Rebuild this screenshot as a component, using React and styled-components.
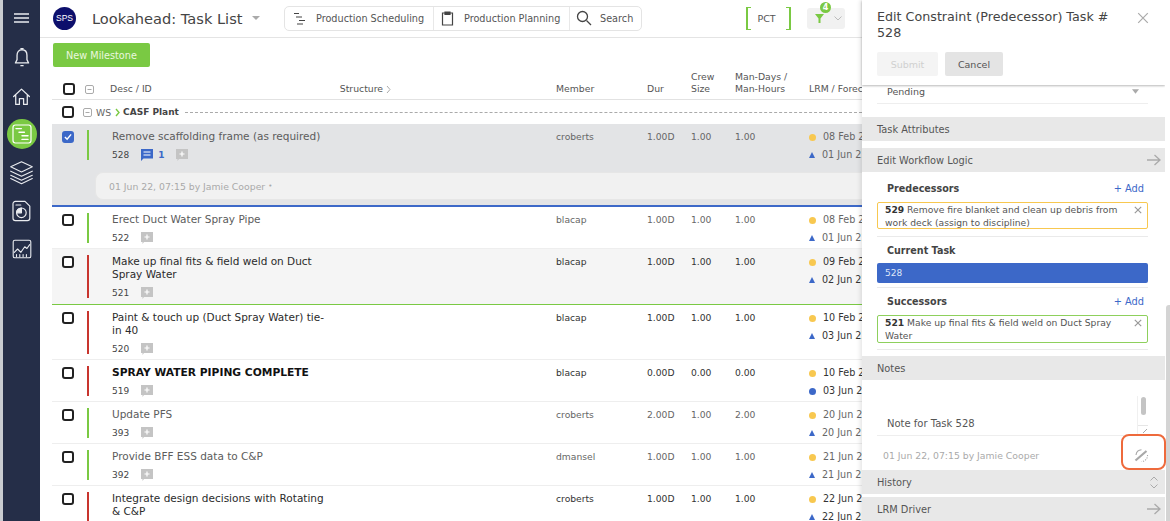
import React from 'react'
import styled, { createGlobalStyle } from 'styled-components'

const Global = createGlobalStyle`
html, body {
  margin: 0;
  height: 100%;
  overflow: hidden;
  background: #fff;
}
* { box-sizing: border-box; }
body {
  font-family: "DejaVu Sans", Verdana, sans-serif;
  font-size: 10px;
  color: #444;
}
`

const Shell = styled.div`
  display: flex;
  height: 521px;
  width: 1170px;
  overflow: hidden;
  position: relative;
  border-left: 3px solid #c9ccd1;
`

/* ---- left nav ---- */
const Sidebar = styled.nav`
  width: 37px;
  flex: none;
  background: #252e48;
  display: flex;
  flex-direction: column;
  align-items: center;
  padding-top: 8px;
`
const NavItem = styled.div`
  width: 30px;
  height: 30px;
  flex: none;
  margin-bottom: 8.2px;
  display: flex;
  align-items: center;
  justify-content: center;
  border-radius: 50%;
  color: #e9ebef;
  background: ${props => (props.$active ? '#7ac943' : 'transparent')};
`
const Burger = styled(NavItem)`
  height: 20px;
  margin-bottom: 15px;
`

/* ---- main area ---- */
const Main = styled.main`
  flex: none;
  width: 822px;
  overflow: hidden;
  display: flex;
  flex-direction: column;
`
const TopBar = styled.header`
  height: 38px;
  flex: none;
  display: flex;
  align-items: center;
  padding: 0 0 1px 13px;
  border-bottom: 1px solid #e4e4e4;
`
const Logo = styled.div`
  width: 23px;
  height: 23px;
  border-radius: 50%;
  background: #0d0f6c;
  color: #fff;
  font-family: "Liberation Sans", Arial, sans-serif;
  font-size: 8.5px;
  display: flex;
  align-items: center;
  justify-content: center;
  margin-right: 16px;
`
const PageTitle = styled.h1`
  margin: 0;
  font-weight: 400;
  font-size: 14.6px;
  color: #444;
  white-space: nowrap;
  width: 152px;
`
const TitleCaret = styled.span`
  width: 0;
  height: 0;
  margin: 0 24px 0 8px;
  border-left: 4px solid transparent;
  border-right: 4px solid transparent;
  border-top: 4px solid #aaa;
`
const NavGroup = styled.div`
  display: flex;
  height: 25px;
  border: 1px solid #e4e4e4;
  border-radius: 5px;
  width: 358px;
`
const NavButton = styled.div`
  display: flex;
  align-items: center;
  justify-content: flex-start;
  gap: ${props => props.$gap}px;
  padding-left: ${props => props.$pad}px;
  width: ${props => props.$w}px;
  font-size: 9.7px;
  color: #555;
  white-space: nowrap;
  border-left: ${props => (props.$first ? 'none' : '1px solid #e8e8e8')};
`
const Pct = styled.div`
  margin-left: 104px;
  width: 45px;
  height: 23px;
  border: 2px solid #7ac943;
  border-top-width: 1px;
  border-bottom-width: 1px;
  position: relative;
  display: flex;
  align-items: center;
  justify-content: center;
  padding-right: 4px;
  font-size: 9.5px;
  color: #555;
  &::before {
    content: '';
    position: absolute;
    top: -1px;
    bottom: -1px;
    left: 3px;
    right: 3px;
    border-top: 1px solid #fff;
    border-bottom: 1px solid #fff;
  }
`
const FilterButton = styled.div`
  margin-left: 16px;
  width: 38px;
  height: 21px;
  background: #f1f1f1;
  border-radius: 3px;
  position: relative;
  display: flex;
  align-items: center;
  padding-left: 8px;
  gap: 10px;
`
const FilterBadge = styled.span`
  position: absolute;
  top: -6px;
  left: 13px;
  width: 11px;
  height: 11px;
  border-radius: 50%;
  background: #7ac943;
  color: #fff;
  font-size: 8px;
  font-weight: 700;
  line-height: 11px;
  text-align: center;
`
const Toolbar = styled.div`
  height: 30px;
  flex: none;
  padding: 5px 0 0 13px;
`
const MilestoneButton = styled.div`
  width: 97px;
  height: 24px;
  background: #7ac943;
  border-radius: 2px;
  color: #eaf7df;
  font-size: 9.7px;
  display: flex;
  align-items: center;
  justify-content: center;
`

/* ---- table ---- */
const Table = styled.div`
  margin-left: 12px;
  width: 810px;
`
const gridCols = '60px 444px 91px 44px 44px 74px 1fr'
const HeadRow = styled.div`
  display: grid;
  grid-template-columns: ${gridCols};
  height: 32px;
  align-items: end;
  padding-bottom: 4px;
  border-bottom: 1px solid #e2e2e2;
  font-size: 9.3px;
  line-height: 12px;
  color: #555;
`
const HeadLead = styled.div`
  display: flex;
  align-items: center;
  padding-left: 11px;
  gap: 10px;
`
const HeadDesc = styled.div`
  display: flex;
  margin-left: -2px;
`
const HeadStructure = styled.span`
  margin-left: 188px;
  display: flex;
  align-items: center;
  gap: 3px;
`
const Clip = styled.span`
  white-space: nowrap;
`
const GroupRow = styled.div`
  display: flex;
  align-items: center;
  height: 24px;
  padding-left: 10px;
  font-size: 9.3px;
  color: #666;
`
const Spacer = styled.span`
  width: ${props => props.$w}px;
  flex: none;
`
const GroupName = styled.b`
  color: #444;
  font-size: 9px;
  margin: 0 6px 0 3px;
  white-space: nowrap;
`
const DashLine = styled.span`
  flex: 1;
  border-top: 1px dashed #aaa;
`
const Check = styled.span`
  width: 12px;
  height: 12px;
  flex: none;
  border-radius: 3px;
  border: 2px solid ${props => (props.$on ? '#3c68c8' : '#222')};
  background: ${props => (props.$on ? '#3c68c8' : '#fff')};
  display: flex;
  align-items: center;
  justify-content: center;
`
const RowWrap = styled.div`
  background: ${props => props.$bg || '#fff'};
  border-bottom: ${props => props.$line || '1px solid #eee'};
`
const Row = styled.div`
  display: grid;
  grid-template-columns: ${gridCols};
  padding: 6px 0 ${props => props.$pb ?? 3}px;
  min-height: 41px;
`
const Lead = styled.div`
  display: flex;
  align-items: flex-start;
  padding: 1px 0 0 10px;
`
const Bar = styled.span`
  width: 2px;
  align-self: stretch;
  margin: -1px 0 2px 13px;
  background: ${props => props.$color};
`
const Desc = styled.div`
  width: 218px;
`
const TaskTitle = styled.div`
  font-size: ${props => (props.$bold ? 10.7 : 10.5)}px;
  line-height: 13px;
  font-weight: ${props => (props.$bold ? 700 : 400)};
  color: ${props => props.$color};
`
const IdLine = styled.div`
  display: flex;
  align-items: center;
  height: 14px;
  margin-top: 5px;
  font-size: 9px;
  color: #444;
`
const NoteCount = styled.span`
  display: flex;
  align-items: center;
  gap: 5px;
  margin-left: 12px;
  color: #3c68c8;
  font-weight: 700;
`
const AddNote = styled.span`
  margin-left: ${props => props.$ml || 12}px;
  display: flex;
`
const Cell = styled.div`
  font-size: 9.2px;
  line-height: 14px;
  color: ${props => props.$color};
  white-space: nowrap;
`
const DateCell = styled.div`
  display: flex;
  flex-direction: column;
  gap: 4px;
  white-space: nowrap;
  font-size: 9.6px;
  line-height: 14px;
  color: ${props => props.$color};
`
const DateLine = styled.div`
  display: flex;
  align-items: center;
  gap: 7px;
`
const Dot = styled.span`
  width: 7px;
  height: 7px;
  flex: none;
  border-radius: 50%;
  background: ${props => props.$color};
`
const Tri = styled.span`
  width: 0;
  height: 0;
  flex: none;
  border-left: 3.5px solid transparent;
  border-right: 3.5px solid transparent;
  border-bottom: 6px solid #3c68c8;
`
const NoteBand = styled.div`
  padding: 0 0 5px 43px;
`
const NoteBox = styled.div`
  height: 28px;
  background: #f1f1f1;
  border: 1px solid #e6e6e6;
  border-right: none;
  border-radius: 8px 0 0 8px;
  display: flex;
  align-items: center;
  padding-left: 13px;
  font-size: 9.3px;
  color: #a9a9a9;
`
const NoteDotted = styled.span`
  font-size: 7px;
  margin-left: 3px;
`

/* ---- right panel ---- */
const Panel = styled.aside`
  width: 303px;
  flex: none;
  display: flex;
  flex-direction: column;
  background: #fff;
  box-shadow: -2px 0 4px rgba(0, 0, 0, 0.1);
  z-index: 2;
`
const PanelHead = styled.div`
  height: 85px;
  flex: none;
  padding: 9px 15px 0;
  position: relative;
  box-shadow: 0 1px 2px rgba(0, 0, 0, 0.28);
  z-index: 1;
`
const PanelTitle = styled.div`
  font-size: 12.7px;
  line-height: 16px;
  color: #444;
  width: 250px;
`
const PanelClose = styled.span`
  position: absolute;
  top: 12px;
  right: 16px;
  display: flex;
`
const HeadActions = styled.div`
  display: flex;
  gap: 7px;
  margin-top: 11px;
`
const Btn = styled.div`
  width: ${props => props.$w}px;
  height: 24px;
  border-radius: 2px;
  background: ${props => (props.$off ? '#f4f4f4' : '#e4e4e4')};
  color: ${props => (props.$off ? '#d0d0d0' : '#555')};
  font-size: 9.5px;
  display: flex;
  align-items: center;
  justify-content: center;
`
const PanelBody = styled.div`
  flex: 1;
  min-height: 0;
  overflow: hidden;
`
const SelectRow = styled.div`
  margin: 0 17px 13px 15px;
  height: 19px;
  display: flex;
  align-items: center;
  justify-content: space-between;
  padding: 0 9px 5px 10px;
  border-bottom: 1px solid #eee;
  font-size: 9.5px;
  color: #555;
`
const Band = styled.div`
  height: 24px;
  background: #e8e8e8;
  margin-top: ${props => props.$mt || 0}px;
  margin-bottom: ${props => props.$mb || 0}px;
  display: flex;
  align-items: center;
  justify-content: space-between;
  padding: 0 4px 0 15px;
  font-size: 9.8px;
  color: #555;
`
const Section = styled.div`
  margin: 0 17px 0 15px;
  padding-bottom: ${props => props.$pb || 7}px;
  border-bottom: 1px solid #eaeaea;
`
const SectionHead = styled.div`
  display: flex;
  justify-content: space-between;
  align-items: center;
  height: 16px;
  padding: 0 4px 0 10px;
  margin: ${props => props.$mt || 8}px 0 ${props => props.$mb || 6}px;
  font-size: 9.6px;
  font-weight: 700;
  color: #444;
`
const AddLink = styled.span`
  color: #3c68c8;
  font-weight: 400;
  font-size: 9.8px;
`
const LinkBox = styled.div`
  border: 1.5px solid ${props => props.$color};
  border-radius: 2px;
  padding: 0 22px 0 7px;
  font-size: 9.2px;
  line-height: 13px;
  color: #555;
  height: ${props => props.$h}px;
  position: relative;
  b { color: #333; }
`
const LinkRemove = styled.span`
  position: absolute;
  top: 3px;
  right: 5px;
  display: flex;
`
const CurrentBox = styled.div`
  height: 20px;
  background: #3c68c8;
  border-radius: 2px;
  color: #dfe7f8;
  font-size: 9px;
  display: flex;
  align-items: center;
  padding-left: 8px;
`
const NotesArea = styled.div`
  height: 56px;
  margin: 0 17px 0 15px;
  border-bottom: 1px solid #eee;
  display: flex;
  align-items: flex-end;
  justify-content: space-between;
  padding: 0 0 6px 10px;
  font-size: 10px;
  color: #555;
  position: relative;
`
const NoteScroll = styled.span`
  position: absolute;
  right: 0;
  top: 16px;
  bottom: 0;
  width: 11px;
  border-left: 1px solid #f0f0f0;
  &::before {
    content: '';
    position: absolute;
    left: 3px;
    top: 1px;
    width: 5px;
    height: 18px;
    border-radius: 3px;
    background: #c4c4c4;
  }
  &::after {
    content: '';
    position: absolute;
    left: 0;
    right: 0;
    top: 29px;
    border-top: 1px solid #e6e6e6;
  }
`
const ScrollGrip = styled.svg`
  position: absolute;
  left: 5px;
  bottom: 1px;
`
const NoteMeta = styled.div`
  height: 34px;
  margin: 0 0 0 21px;
  padding: 4px 16px 0 0;
  display: flex;
  align-items: center;
  justify-content: space-between;
  font-size: 9.3px;
  color: #aaa;
`
const Arrows = styled.span`
  display: flex;
  flex-direction: column;
  margin-right: 3px;
  gap: 3px;
`
const Highlight = styled.div`
  position: absolute;
  left: 1118px;
  top: 434px;
  width: 45px;
  height: 36px;
  border: 2px solid #ee6a3c;
  border-radius: 8px;
  z-index: 5;
`
const ScrollTrack = styled.div`
  width: 5px;
  flex: none;
  padding: 305px 0 0 1px;
  background: #fff;
  z-index: 3;
  &::before {
    content: '';
    display: block;
    height: 216px;
    background: #d4d4d4;
    border-radius: 3px 0 0 0;
  }
`

/* ---- icons ---- */
const Stroke = ({ size = 20, children, color = 'currentColor', w = 1.2 }) => (
  <svg width={size} height={size} viewBox="0 0 20 20" fill="none" stroke={color} strokeWidth={w} strokeLinecap="round" strokeLinejoin="round">
    {children}
  </svg>
)
const GanttLines = ({ color }) => (
  <g stroke={color} strokeWidth="1.200">
    <path d="M5 5.500h4.500M7.500 8.500h4.500M10 11.500h5M10 14.500h5" />
  </g>
)
const AddIcon = () => (
  <svg width="12" height="12" viewBox="0 0 12 12">
    <path d="M0 0h12v10H3l-1.500 2V10H0z" fill="#c4c4c4" />
    <path d="M6 2.500v5M3.500 5h5" stroke="#fff" strokeWidth="1.200" />
  </svg>
)
const Cross = ({ size = 8, color = '#999', w = 1.5 }) => (
  <svg width={size} height={size} viewBox="0 0 10 10">
    <path d="M1 1l8 8M9 1l-8 8" stroke={color} strokeWidth={w} />
  </svg>
)
const ArrowRight = () => (
  <svg width="14" height="12" viewBox="0 0 14 12" fill="none" stroke="#aaa" strokeWidth="1.300">
    <path d="M0 6h13M7.500 1l5.500 5-5.500 5" />
  </svg>
)
const Collapse = () => (
  <svg width="9" height="9" viewBox="0 0 9 9" fill="none" stroke="#aaa">
    <rect x="0.500" y="0.500" width="8" height="8" rx="1.500" />
    <path d="M2.500 4.500h4" />
  </svg>
)
const TickMark = () => (
  <svg width="9" height="8" viewBox="0 0 9 8" fill="none" stroke="#fff" strokeWidth="1.600">
    <path d="M1 4l2.500 2.500L8 1" />
  </svg>
)
const Chevron = ({ color = '#aaa', w = 1 }) => (
  <svg width="5" height="9" viewBox="0 0 5 9" fill="none" stroke={color} strokeWidth={w}>
    <path d="M1 1l3 3.500L1 8" />
  </svg>
)

const green = '#7ac943'
const red = '#c8352e'

const rows = [
  { id: 522, title: 'Erect Duct Water Spray Pipe', bar: green, member: 'blacap', dur: '1.00D', crew: '1.00', man: '1.00', d1: '08 Feb 22', d2: '01 Jun 22', muted: true },
  { id: 521, title: 'Make up final fits & field weld on Duct Spray Water', bar: red, member: 'blacap', dur: '1.00D', crew: '1.00', man: '1.00', d1: '09 Feb 22', d2: '02 Jun 22', bg: '#f5f5f5', line: `1px solid ${green}`, pb: 4 },
  { id: 520, title: 'Paint & touch up (Duct Spray Water) tie-in 40', bar: red, member: 'blacap', dur: '1.00D', crew: '1.00', man: '1.00', d1: '10 Feb 22', d2: '03 Jun 22' },
  { id: 519, title: 'SPRAY WATER PIPING COMPLETE', bold: true, bar: red, member: 'blacap', dur: '0.00D', crew: '0.00', man: '0.00', d1: '10 Feb 22', d2: '03 Jun 22', dot2: true },
  { id: 393, title: 'Update PFS', bar: green, member: 'croberts', dur: '2.00D', crew: '1.00', man: '2.00', d1: '20 Jun 22', d2: '20 Jun 22', muted: true },
  { id: 392, title: 'Provide BFF ESS data to C&P', bar: green, member: 'dmansel', dur: '1.00D', crew: '1.00', man: '1.00', d1: '21 Jun 22', d2: '21 Jun 22', muted: true },
  { id: 391, title: 'Integrate design decisions with Rotating & C&P', bar: red, member: 'croberts', dur: '1.00D', crew: '1.00', man: '1.00', d1: '22 Jun 22', d2: '22 Jun 22' },
]

const TaskCells = ({ row, children }) => {
  const textColor = row.muted ? '#666' : '#333'
  const titleColor = row.bold ? '#111' : row.muted ? '#5c5c5c' : '#2b2b2b'
  return (
    <Row $pb={row.pb}>
      <Lead>
        <Check $on={row.on}>{row.on && <TickMark />}</Check>
        <Bar $color={row.bar} />
      </Lead>
      <Desc>
        <TaskTitle $bold={row.bold} $color={titleColor}>{row.title}</TaskTitle>
        <IdLine>{row.id}{children}</IdLine>
      </Desc>
      <Cell $color={textColor}>{row.member}</Cell>
      <Cell $color={textColor}>{row.dur}</Cell>
      <Cell $color={textColor}>{row.crew}</Cell>
      <Cell $color={textColor}>{row.man}</Cell>
      <DateCell $color={textColor}>
        <DateLine><Dot $color="#f8c850" />{row.d1}</DateLine>
        <DateLine>{row.dot2 ? <Dot $color="#3c68c8" /> : <Tri />}{row.d2}</DateLine>
      </DateCell>
    </Row>
  )
}

const App = () => {
  return (
    <>
      <Global />
      <Shell>
        <Sidebar>
          <Burger>
            <svg width="15" height="10" viewBox="0 0 15 10" stroke="#e9ebef" strokeWidth="1.500">
              <path d="M0 1h15M0 5h15M0 9h15" />
            </svg>
          </Burger>
          <NavItem>
            <Stroke size={22}>
              <path d="M10 2.500c-3 0-4.500 2.300-4.500 5v4L4 14.500h12L14.500 11.500v-4c0-2.700-1.500-5-4.500-5z" />
              <path d="M9 1.500h2M9 17h2" />
            </Stroke>
          </NavItem>
          <NavItem>
            <Stroke size={21}>
              <path d="M2.500 10L10 3l7.500 7M4.500 9v8.500h3.500V12h4v5.500h3.500V9" />
            </Stroke>
          </NavItem>
          <NavItem $active>
            <Stroke size={24} color="#fff" w={1}>
              <rect x="2.500" y="2.500" width="15" height="15" rx="2" />
              <GanttLines color="#fff" />
            </Stroke>
          </NavItem>
          <NavItem>
            <Stroke size={27} w={0.800}>
              <path d="M10 2l8 3.800-8 3.800-8-3.800zM2 9l8 3.800L18 9M2 12l8 3.800 8-3.800M2 14.500l8 3.800 8-3.800" />
            </Stroke>
          </NavItem>
          <NavItem>
            <Stroke size={24} w={1}>
              <path d="M4.500 2h8l4 4v10a2 2 0 0 1-2 2h-10a2 2 0 0 1-2-2V4a2 2 0 0 1 2-2z" />
              <circle cx="9.500" cy="11.500" r="4" />
              <path d="M9.500 11.500V7.500a4 4 0 0 0-4 4z" fill="currentColor" />
              <path d="M5 5h4" />
            </Stroke>
          </NavItem>
          <NavItem>
            <Stroke size={22} w={1}>
              <rect x="2" y="2" width="16" height="16" rx="1.500" />
              <path d="M3 13l3-3 3 3 3.500-5 2 1.500L17 6" />
              <path d="M5 15v2M8 15v2M11 15v2M14 15v2" />
            </Stroke>
          </NavItem>
        </Sidebar>

        <Main>
          <TopBar>
            <Logo>SPS</Logo>
            <PageTitle>Lookahead: Task List</PageTitle>
            <TitleCaret />
            <NavGroup>
              <NavButton $first $w={148} $gap={10} $pad={9}>
                <svg width="12" height="13" viewBox="0 0 12 13" stroke="#444" strokeWidth="1.200">
                  <path d="M0 1.500h5M2 5h6M5 8.500h6M3 12h6" />
                </svg>
                Production Scheduling
              </NavButton>
              <NavButton $w={136} $gap={10} $pad={7}>
                <svg width="13" height="15" viewBox="0 0 13 15" fill="none" stroke="#444" strokeWidth="1.200">
                  <path d="M4 2H1.500v12h10V2H9" />
                  <path d="M4 1h5v2.500H4z" fill="#444" />
                </svg>
                Production Planning
              </NavButton>
              <NavButton $w={72} $gap={8} $pad={6}>
                <svg width="16" height="16" viewBox="0 0 16 16" fill="none" stroke="#444" strokeWidth="1.300">
                  <circle cx="6.500" cy="6.500" r="5" />
                  <path d="M10.500 10.500L15 15" />
                </svg>
                Search
              </NavButton>
            </NavGroup>
            <Pct>PCT</Pct>
            <FilterButton>
              <svg width="9" height="9" viewBox="0 0 9 9">
                <path d="M0 0h9L5.500 4.500V9h-2V4.500z" fill="#7ac943" />
              </svg>
              <FilterBadge>4</FilterBadge>
              <svg width="8" height="5" viewBox="0 0 8 5" fill="none" stroke="#bbb">
                <path d="M.5.500L4 4 7.500.500" />
              </svg>
            </FilterButton>
          </TopBar>
          <Toolbar>
            <MilestoneButton>New Milestone</MilestoneButton>
          </Toolbar>
          <Table>
            <HeadRow>
              <HeadLead>
                <Check />
                <Collapse />
              </HeadLead>
              <HeadDesc>
                Desc / ID
                <HeadStructure>Structure <Chevron /></HeadStructure>
              </HeadDesc>
              <span>Member</span>
              <span>Dur</span>
              <span>Crew<br />Size</span>
              <span>Man-Days /<br />Man-Hours</span>
              <Clip>LRM / Forecast</Clip>
            </HeadRow>
            <GroupRow>
              <Check />
              <Spacer $w={9} />
              <Collapse />
              <Spacer $w={4} />
              WS
              <Spacer $w={4} />
              <Chevron color="#7ac943" w={1.400} />
              <GroupName>CASF Plant</GroupName>
              <DashLine />
            </GroupRow>
            <RowWrap $bg="#e3e4e6" $line="2px solid #3c68c8">
              <TaskCells row={{ id: 528, title: 'Remove scaffolding frame (as required)', bar: green, member: 'croberts', dur: '1.00D', crew: '1.00', man: '1.00', d1: '08 Feb 22', d2: '01 Jun 22', on: true, pb: 10, muted: true }}>
                <NoteCount>
                  <svg width="12" height="12" viewBox="0 0 12 12">
                    <path d="M0 0h12v9.500H2.500L0 12z" fill="#3c68c8" />
                    <path d="M2.500 3h7M2.500 6h7" stroke="#fff" />
                  </svg>
                  1
                </NoteCount>
                <AddNote $ml={12}><AddIcon /></AddNote>
              </TaskCells>
              <NoteBand>
                <NoteBox>01 Jun 22, 07:15 by Jamie Cooper<NoteDotted>•</NoteDotted></NoteBox>
              </NoteBand>
            </RowWrap>
            {rows.map(row => (
              <RowWrap key={row.id} $bg={row.bg} $line={row.line}>
                <TaskCells row={row}>
                  <AddNote><AddIcon /></AddNote>
                </TaskCells>
              </RowWrap>
            ))}
          </Table>
        </Main>

        <Panel>
          <PanelHead>
            <PanelTitle>Edit Constraint (Predecessor) Task # 528</PanelTitle>
            <PanelClose><Cross size={12} color="#aaa" w={1} /></PanelClose>
            <HeadActions>
              <Btn $off $w={61}>Submit</Btn>
              <Btn $w={58}>Cancel</Btn>
            </HeadActions>
          </PanelHead>
          <PanelBody>
            <SelectRow>
              Pending
              <svg width="7" height="5" viewBox="0 0 8 5"><path d="M0 0h8L4 5z" fill="#aaa" /></svg>
            </SelectRow>
            <Band $mb={7}>Task Attributes</Band>
            <Band>Edit Workflow Logic <ArrowRight /></Band>
            <Section>
              <SectionHead>Predecessors <AddLink>+ Add</AddLink></SectionHead>
              <LinkBox $color="#f8c850" $h={27}>
                <b>529</b> Remove fire blanket and clean up debris from work deck (assign to discipline)
                <LinkRemove><Cross /></LinkRemove>
              </LinkBox>
            </Section>
            <Section $pb={4}>
              <SectionHead $mt={5} $mb={5}>Current Task</SectionHead>
              <CurrentBox>528</CurrentBox>
            </Section>
            <Section $pb={6}>
              <SectionHead $mt={5} $mb={6}>Successors <AddLink>+ Add</AddLink></SectionHead>
              <LinkBox $color="#8ed05c" $h={28}>
                <b>521</b> Make up final fits & field weld on Duct Spray Water
                <LinkRemove><Cross /></LinkRemove>
              </LinkBox>
            </Section>
            <Band $mt={6}>Notes</Band>
            <NotesArea>
              Note for Task 528
              <NoteScroll>
                <ScrollGrip width="5" height="6" viewBox="0 0 5 6" fill="none" stroke="#aaa">
                  <path d="M0 5l4-4" />
                </ScrollGrip>
              </NoteScroll>
            </NotesArea>
            <NoteMeta>
              01 Jun 22, 07:15 by Jamie Cooper
              <svg width="15" height="15" viewBox="0 0 15 15" fill="none" stroke="#a8a8a8">
                <path d="M1.500 12.500L12.500 3" strokeWidth="2.200" />
                <path d="M7.500 1.800A6 6 0 0 0 2 7" strokeWidth="1.100" />
                <path d="M13.500 7A6 6 0 0 1 7.500 13.500" strokeWidth="1.100" strokeDasharray="1.200 1.200" />
              </svg>
            </NoteMeta>
            <Band $mb={3}>
              History
              <Arrows>
                <svg width="8" height="5" viewBox="0 0 8 5" fill="none" stroke="#aaa"><path d="M.5 4.500L4 1l3.500 3.500" /></svg>
                <svg width="8" height="5" viewBox="0 0 8 5" fill="none" stroke="#aaa"><path d="M.5.500L4 4l3.500-3.500" /></svg>
              </Arrows>
            </Band>
            <Band>LRM Driver <ArrowRight /></Band>
          </PanelBody>
        </Panel>
        <ScrollTrack />
        <Highlight />
      </Shell>
    </>
  )
}

export default App
